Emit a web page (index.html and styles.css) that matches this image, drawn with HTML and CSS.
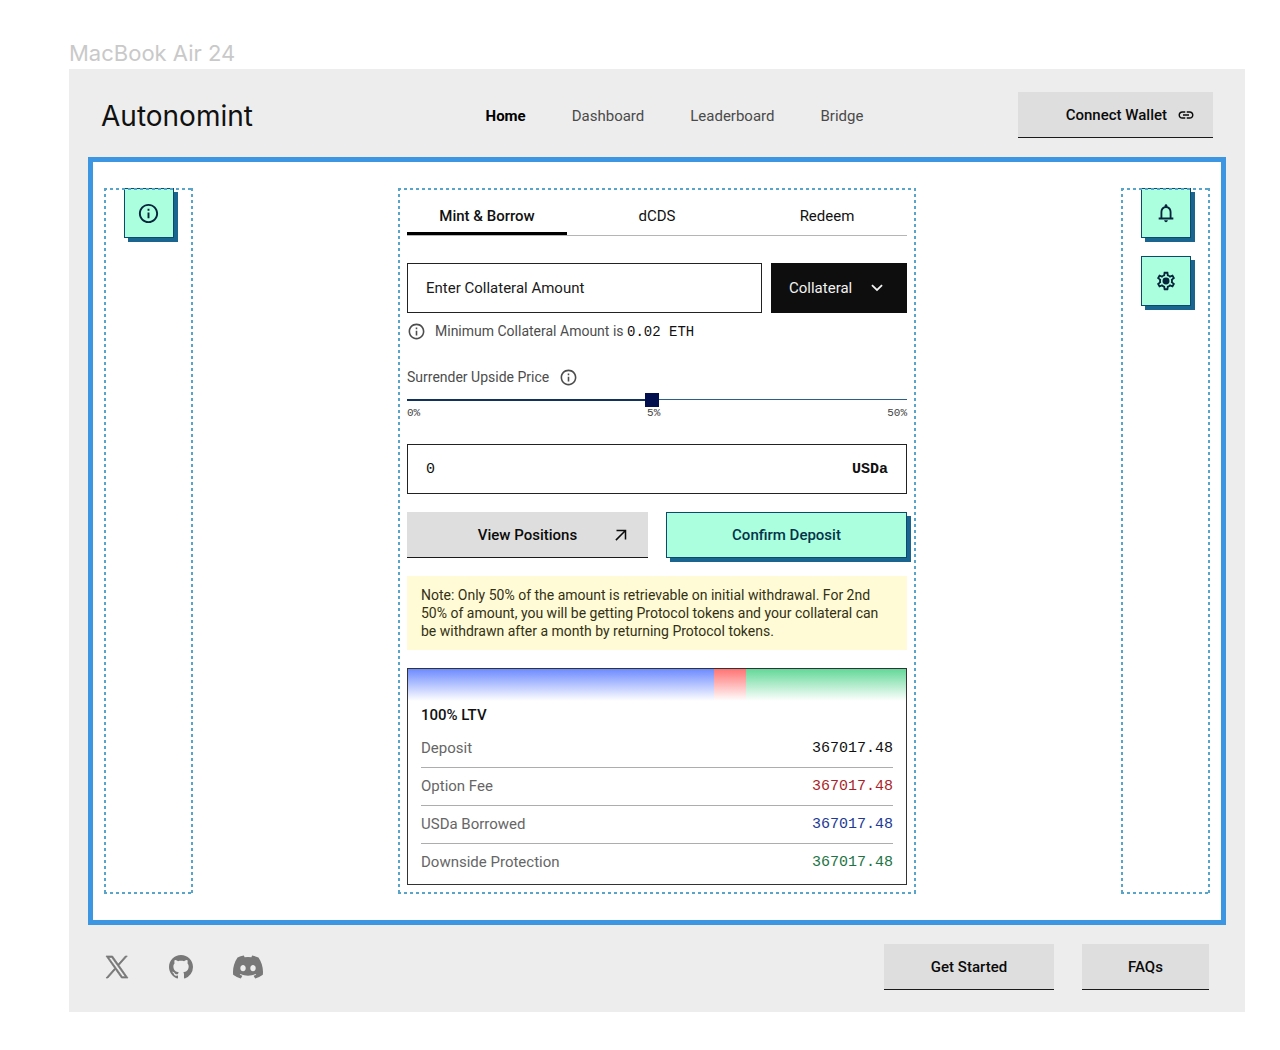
FILE: index.html
```html
<!DOCTYPE html>
<html lang="en">
<head>
<meta charset="utf-8">
<meta name="viewport" content="width=device-width, initial-scale=1">
<title>Autonomint</title>
<link rel="stylesheet" href="styles.css">
</head>
<body>
<svg class="sprite" width="0" height="0" aria-hidden="true">
  <symbol id="info" viewBox="0 0 24 24"><path d="M11 7h2v2h-2zm0 4h2v6h-2zm1-9C6.48 2 2 6.48 2 12s4.480 10 10 10 10-4.480 10-10S17.520 2 12 2zm0 18c-4.410 0-8-3.590-8-8s3.590-8 8-8 8 3.590 8 8-3.590 8-8 8z"/></symbol>
</svg>
<p class="frame-name">MacBook Air 24</p>
<div class="frame">
  <header class="header">
    <a class="logo" href="#">Autonomint</a>
    <nav class="nav">
      <a class="nav-link active" href="#">Home</a>
      <a class="nav-link" href="#">Dashboard</a>
      <a class="nav-link" href="#">Leaderboard</a>
      <a class="nav-link" href="#">Bridge</a>
    </nav>
    <button class="btn wallet" type="button">Connect Wallet
      <svg width="18" height="18" viewBox="0 0 24 24"><path d="M3.900 12c0-1.710 1.390-3.100 3.100-3.100h4V7H7c-2.760 0-5 2.240-5 5s2.240 5 5 5h4v-1.900H7c-1.710 0-3.100-1.390-3.100-3.100zM8 13h8v-2H8v2zm9-6h-4v1.900h4c1.710 0 3.100 1.390 3.100 3.100s-1.390 3.100-3.100 3.100h-4V17h4c2.760 0 5-2.240 5-5s-2.240-5-5-5z"/></svg>
    </button>
  </header>

  <main class="panel">
    <aside class="side outlined">
      <button class="icon-btn" type="button" aria-label="Information"><svg width="23" height="23"><use href="#info"/></svg></button>
    </aside>

    <section class="center outlined">
      <div class="tabs" role="tablist">
        <button class="tab selected" type="button" role="tab" aria-selected="true">Mint &amp; Borrow</button>
        <button class="tab" type="button" role="tab">dCDS</button>
        <button class="tab" type="button" role="tab">Redeem</button>
      </div>

      <div class="amount-row">
        <input class="field" type="text" placeholder="Enter Collateral Amount" aria-label="Enter Collateral Amount">
        <div class="select">
          <select aria-label="Collateral"><option>Collateral</option><option>ETH</option></select>
          <svg width="20" height="20" viewBox="0 0 24 24"><path d="M6.700 7.700 12 13l5.300-5.300 1.500 1.500L12 16 5.200 9.200z"/></svg>
        </div>
      </div>
      <p class="hint"><svg width="19" height="19"><use href="#info"/></svg><span>Minimum Collateral Amount is <b class="mono">0.02 ETH</b></span></p>

      <div class="slider-head"><label for="upside">Surrender Upside Price</label><svg width="19" height="19"><use href="#info"/></svg></div>
      <input class="slider" id="upside" type="range" min="0" max="100" value="49">
      <div class="ticks"><span>0%</span><span>5%</span><span>50%</span></div>

      <div class="field output"><input id="usda" type="text" value="0"><label for="usda">USDa</label></div>

      <div class="actions">
        <button class="btn view" type="button"><span>View Positions</span>
          <svg width="18" height="18" viewBox="0 0 24 24"><path d="M6 5v2h9.590L4.500 18.090 5.910 19.500 17 8.410V18h2V5z"/></svg>
        </button>
        <button class="btn confirm" type="button">Confirm Deposit</button>
      </div>

      <p class="note">Note: Only 50% of the amount is retrievable on initial withdrawal. For 2nd 50% of amount, you will be getting Protocol tokens and your collateral can be withdrawn after a month by returning Protocol tokens.</p>

      <div class="card">
        <div class="bar"><i class="blue"></i><i class="red"></i><i class="green"></i></div>
        <h2 class="ltv">100% LTV</h2>
        <table class="rows">
          <tr><th scope="row">Deposit</th><td>367017.48</td></tr>
          <tr><th scope="row">Option Fee</th><td class="fee">367017.48</td></tr>
          <tr><th scope="row">USDa Borrowed</th><td class="borrowed">367017.48</td></tr>
          <tr><th scope="row">Downside Protection</th><td class="protection">367017.48</td></tr>
        </table>
      </div>
    </section>

    <aside class="side outlined">
      <button class="icon-btn" type="button" aria-label="Notifications"><svg width="22" height="22" viewBox="0 0 24 24"><path d="M12 22c1.100 0 2-.9 2-2h-4c0 1.100.9 2 2 2zm6-5v-6c0-3.070-1.630-5.640-4.500-6.320V4c0-.83-.67-1.500-1.500-1.500s-1.500.67-1.500 1.500v.68C7.640 5.360 6 7.920 6 11v6H4v2h16v-2h-2zm-2 0H8v-6c0-2.480 1.510-4.500 4-4.500s4 2.020 4 4.500v6z"/></svg></button>
      <button class="icon-btn" type="button" aria-label="Settings"><svg width="22" height="22" viewBox="0 0 24 24"><path d="M19.430 12.980c.04-.32.07-.64.07-.98 0-.34-.03-.66-.07-.98l2.110-1.650c.19-.15.24-.42.12-.64l-2-3.460c-.09-.16-.26-.25-.44-.25-.06 0-.12.010-.17.030l-2.490 1c-.52-.4-1.080-.73-1.690-.98l-.38-2.650C14.460 2.180 14.250 2 14 2h-4c-.25 0-.46.18-.49.42l-.38 2.650c-.61.25-1.170.59-1.690.98l-2.490-1c-.06-.02-.12-.03-.18-.03-.17 0-.34.09-.43.25l-2 3.460c-.13.220-.07.49.12.640l2.110 1.650c-.04.32-.07.65-.07.98 0 .33.030.66.070.98l-2.110 1.650c-.19.15-.24.42-.12.640l2 3.460c.09.16.26.25.44.25.06 0 .12-.01.17-.03l2.490-1c.52.4 1.080.73 1.690.98l.38 2.650c.03.24.24.42.49.42h4c.25 0 .46-.18.49-.42l.38-2.650c.61-.25 1.170-.59 1.690-.98l2.490 1c.06.020.12.030.18.030.17 0 .34-.09.43-.25l2-3.460c.12-.22.07-.49-.12-.64l-2.110-1.650zm-1.980-1.710c.04.31.05.52.05.73 0 .21-.02.43-.05.73l-.14 1.130.89.7 1.080.84-.7 1.210-1.270-.51-1.040-.42-.9.680c-.43.32-.84.56-1.250.73l-1.060.43-.16 1.130-.2 1.350h-1.400l-.19-1.350-.16-1.130-1.060-.43c-.43-.18-.83-.41-1.230-.71l-.91-.7-1.060.43-1.270.51-.7-1.210 1.080-.84.89-.7-.14-1.130c-.03-.31-.05-.54-.05-.74s.02-.43.05-.73l.14-1.130-.89-.7-1.080-.84.7-1.210 1.270.51 1.040.42.9-.68c.43-.32.84-.56 1.250-.73l1.060-.43.16-1.130.2-1.350h1.390l.19 1.350.16 1.130 1.060.43c.43.18.83.41 1.230.71l.91.7 1.060-.43 1.270-.51.7 1.210-1.070.85-.89.7.14 1.130z"/><circle cx="12" cy="12" r="3.800"/></svg></button>
    </aside>
  </main>

  <footer class="footer">
    <div class="social">
      <a href="#" aria-label="X"><svg width="24" height="24" viewBox="0 0 24 24"><path d="M14.095 10.316 22.286 1h-1.940l-7.115 8.087L7.551 1H1l8.590 12.231L1 23h1.940l7.510-8.543L16.450 23H23l-8.905-12.684zm-2.658 3.022-.872-1.218L3.640 2.432h2.980l5.590 7.821.869 1.219 7.265 10.166h-2.982l-5.926-8.300z" stroke="currentColor" stroke-width=".7"/></svg></a>
      <a href="#" aria-label="GitHub"><svg width="24" height="24" viewBox="0 0 16 16"><path d="M8 0C3.580 0 0 3.580 0 8c0 3.540 2.290 6.530 5.470 7.590.4.070.55-.17.55-.38 0-.19-.01-.82-.01-1.490-2.010.37-2.530-.49-2.690-.94-.09-.23-.48-.94-.82-1.130-.28-.15-.68-.52-.01-.53.63-.01 1.080.58 1.230.82.72 1.210 1.870.87 2.330.66.07-.52.28-.87.51-1.070-1.780-.2-3.640-.89-3.640-3.950 0-.87.31-1.590.82-2.150-.08-.2-.36-1.020.08-2.120 0 0 .67-.21 2.200.82.64-.18 1.320-.27 2-.27s1.360.09 2 .27c1.530-1.040 2.200-.82 2.200-.82.44 1.100.16 1.920.08 2.120.51.56.82 1.270.82 2.150 0 3.070-1.870 3.750-3.650 3.950.29.25.54.73.54 1.480 0 1.070-.01 1.930-.01 2.200 0 .21.15.46.55.38A8.010 8.010 0 0 0 16 8c0-4.420-3.580-8-8-8z"/></svg></a>
      <a href="#" aria-label="Discord"><svg width="30" height="24" viewBox="0 2.400 24 19.200"><path d="M20.317 4.370a19.790 19.790 0 0 0-4.885-1.515.074.074 0 0 0-.079.037c-.211.375-.445.865-.608 1.250a18.270 18.270 0 0 0-5.487 0 12.640 12.640 0 0 0-.617-1.250.077.077 0 0 0-.079-.037A19.740 19.740 0 0 0 3.677 4.370a.07.07 0 0 0-.032.027C.533 9.046-.320 13.580.099 18.058a.082.082 0 0 0 .031.056 19.900 19.900 0 0 0 5.993 3.030.078.078 0 0 0 .084-.028c.462-.63.874-1.295 1.226-1.994a.076.076 0 0 0-.042-.106 13.110 13.110 0 0 1-1.872-.892.077.077 0 0 1-.008-.128c.126-.094.252-.192.372-.291a.074.074 0 0 1 .078-.011c3.928 1.793 8.180 1.793 12.062 0a.074.074 0 0 1 .079.010c.12.099.246.198.373.292a.077.077 0 0 1-.007.128 12.300 12.300 0 0 1-1.873.891.077.077 0 0 0-.041.107c.36.698.772 1.363 1.225 1.993a.076.076 0 0 0 .084.029 19.840 19.840 0 0 0 6.002-3.030.077.077 0 0 0 .032-.055c.5-5.177-.838-9.674-3.549-13.660a.061.061 0 0 0-.031-.029zM8.020 15.331c-1.183 0-2.157-1.086-2.157-2.419s.955-2.419 2.157-2.419c1.210 0 2.176 1.095 2.157 2.419 0 1.333-.956 2.419-2.157 2.419zm7.975 0c-1.183 0-2.157-1.086-2.157-2.419s.955-2.419 2.157-2.419c1.210 0 2.176 1.095 2.157 2.419 0 1.333-.946 2.419-2.157 2.419z"/></svg></a>
    </div>
    <div class="links">
      <button class="btn started" type="button">Get Started</button>
      <button class="btn faqs" type="button">FAQs</button>
    </div>
  </footer>
</div>
</body>
</html>
```
FILE: styles.css
```css
* { box-sizing: border-box; }

body {
  margin: 0;
  padding: 0 35px 38px 69px;
  background: #fff;
  color: #111;
  font: 400 15px/20px Roboto, "Noto Sans", sans-serif;
}

p, h2 { margin: 0; }
button, input, select { font: inherit; color: inherit; margin: 0; border-radius: 0; }
a { color: inherit; text-decoration: none; }
svg { display: block; fill: currentColor; flex: none; }
.sprite { position: absolute; }
.mono, .ticks, .rows td, .output { font-family: "Liberation Mono", monospace; }

.frame-name {
  padding: 39px 0 2px;
  color: #c9c9c9;
  font: 400 22px/28px Inter, sans-serif;
}

.frame { background: #ededed; }

/* Header */
.header {
  display: grid;
  grid-template-columns: 11fr auto 10fr;
  align-items: center;
  padding: 23px 32px 19px;
}
.logo { padding-top: 2px; font: 400 28px/36px Inter, sans-serif; }
.nav { display: flex; gap: 46px; padding-top: 2px; }
.nav-link { color: #4a4a4a; }
.nav-link.active { color: #000; font-weight: 700; }

.btn {
  height: 46px;
  padding: 0 18px;
  border: 0;
  border-bottom: 1px solid #1a1a1a;
  background: #dedede;
  color: #0b0b0b;
  font-weight: 500;
}
.wallet {
  display: flex;
  align-items: center;
  justify-content: flex-end;
  justify-self: end;
  gap: 10px;
  width: 195px;
}

/* Workspace */
.panel {
  display: flex;
  justify-content: space-between;
  gap: 16px;
  margin: 0 19px;
  padding: 26px 11px;
  border: 5px solid #3d96e2;
  background: #fff;
}
.outlined { position: relative; }
.outlined::after {
  content: "";
  position: absolute;
  inset: 0;
  pointer-events: none;
  --h: repeating-linear-gradient(90deg, #58a4cb 0 3px, transparent 3px 6px);
  --v: repeating-linear-gradient(#58a4cb 0 3px, transparent 3px 6px);
  background:
    var(--h) top / 100% 2px no-repeat,
    var(--h) bottom / 100% 2px no-repeat,
    var(--v) left / 2px 100% no-repeat,
    var(--v) right / 2px 100% no-repeat;
}
.side {
  display: flex;
  flex-direction: column;
  align-items: center;
  gap: 18px;
  width: 89px;
}
.icon-btn {
  display: grid;
  place-items: center;
  width: 50px;
  height: 50px;
  padding: 0;
  border: 1px solid #0b4a6b;
  background: #abffde;
  box-shadow: 4px 4px 0 #1a6490;
  color: #04253b;
}
.center { width: 518px; padding: 0 9px 9px; }

.tabs {
  display: grid;
  grid-template-columns: repeat(3, 1fr);
  gap: 10px;
  height: 48px;
  border-bottom: 1px solid #b5b5b5;
}
.tab { padding: 12px 0 0; border: 0; border-bottom: 3px solid transparent; background: none; }
.tab.selected { border-color: #000; font-weight: 500; }

.amount-row { display: flex; gap: 9px; margin-top: 27px; }
.field {
  flex: 1;
  min-width: 0;
  height: 50px;
  padding: 0 18px;
  border: 1px solid #222;
  background: #fff;
}
.field::placeholder { color: #1a1a1a; opacity: 1; }
.select { display: grid; align-items: center; width: 136px; color: #f2f2f2; }
.select select {
  grid-area: 1 / 1;
  height: 50px;
  padding: 0 18px;
  border: 0;
  background: #0e0e0e;
  appearance: none;
}
.select svg { grid-area: 1 / 1; justify-self: end; margin-right: 20px; pointer-events: none; }

.hint, .slider-head { display: flex; align-items: center; height: 20px; color: #4d4d4d; font-size: 14px; }
.hint { gap: 9px; margin-top: 8px; }
.hint .mono { color: #111; font-weight: 400; }
.slider-head { gap: 10px; margin-top: 26px; }

.slider {
  display: block;
  width: 100%;
  height: 14px;
  margin-top: 6px;
  appearance: none;
  background:
    linear-gradient(#12325c, #12325c) left 6px / 49% 2px no-repeat,
    linear-gradient(#2a5f86, #2a5f86) left 6px / 100% 1px no-repeat;
}
.slider::-webkit-slider-thumb {
  appearance: none;
  width: 14px;
  height: 14px;
  border: 0;
  background: #020f4f;
}
.ticks {
  display: flex;
  justify-content: space-between;
  color: #444;
  font-size: 11px;
  line-height: 12px;
}

.output { display: flex; align-items: center; justify-content: space-between; margin-top: 25px; padding-top: 2px; }
.output input { flex: 1; min-width: 0; padding: 0; border: 0; background: none; }
.output label { font-weight: 700; }

.actions { display: grid; grid-template-columns: 1fr 1fr; gap: 18px; margin-top: 18px; }
.view { display: grid; grid-template-columns: 1fr auto 1fr; align-items: center; }
.view span { grid-column: 2; }
.view svg { justify-self: end; }
.confirm {
  border: 1px solid #0b4a6b;
  background: #abffde;
  box-shadow: 4px 4px 0 #1a6490;
  color: #04344a;
}

.note {
  margin-top: 18px;
  padding: 10px 14px;
  background: #fffbd6;
  color: #333014;
  font-size: 14px;
  line-height: 18px;
}

.card { margin-top: 18px; padding-bottom: 4px; border: 1px solid #333; }
.bar { display: flex; height: 32px; }
.bar i { background: linear-gradient(var(--c), #fff); }
.blue { --c: #6d8bff; flex: 306; }
.red { --c: #ff7373; flex: 32; }
.green { --c: #64d898; flex: 160; }
.ltv { padding: 4px 13px; font-size: 15px; line-height: 20px; font-weight: 500; }
.rows { width: calc(100% - 26px); margin: 0 13px; border-collapse: collapse; }
.rows th, .rows td { height: 38px; padding: 0; border-bottom: 1px solid #adadad; font-weight: 400; }
.rows tr:last-child > * { height: 37px; border: 0; }
.rows th { color: #666; text-align: left; }
.rows td { padding-top: 2px; text-align: right; }
.rows .fee { color: #ab1f28; }
.rows .borrowed { color: #1e3a96; }
.rows .protection { color: #1d7444; }

/* Footer */
.footer { display: flex; justify-content: space-between; align-items: center; padding: 19px 36px 22px; }
.social { display: flex; align-items: center; gap: 40px; color: #787878; }
.links { display: flex; gap: 28px; }
.started { width: 170px; }
.faqs { width: 127px; }
```
